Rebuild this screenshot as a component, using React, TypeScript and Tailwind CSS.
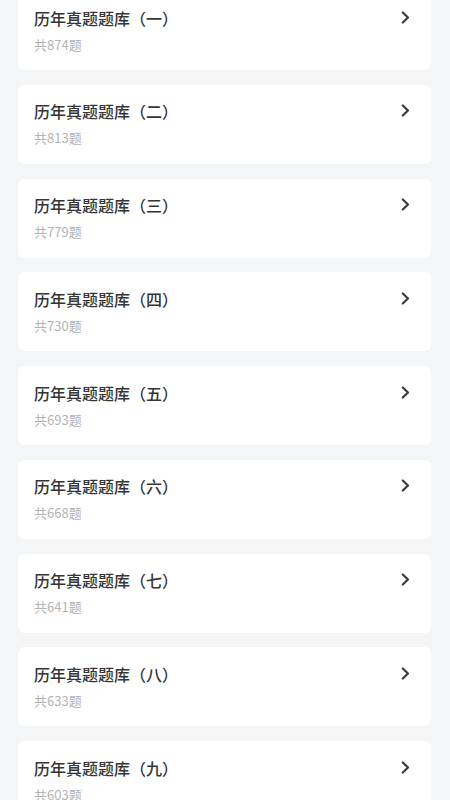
const banks = [
  { name: "历年真题题库（一）", count: 874 },
  { name: "历年真题题库（二）", count: 813 },
  { name: "历年真题题库（三）", count: 779 },
  { name: "历年真题题库（四）", count: 730 },
  { name: "历年真题题库（五）", count: 693 },
  { name: "历年真题题库（六）", count: 668 },
  { name: "历年真题题库（七）", count: 641 },
  { name: "历年真题题库（八）", count: 633 },
  { name: "历年真题题库（九）", count: 603 },
];

function Chevron() {
  return (
    <svg width="9" height="13" viewBox="0 0 9 13" fill="none" className="shrink-0">
      <path d="M1.8 1.5 L7 6.5 L1.8 11.5" stroke="#3a3a3a" strokeWidth="2.2" strokeLinecap="round" strokeLinejoin="round" />
    </svg>
  );
}

export default function App() {
  return (
    <div
      className="min-h-[800px] w-full overflow-hidden bg-[#f4f5f7]"
      style={{ fontFamily: '"Noto Sans CJK SC", "Noto Sans", sans-serif' }}
    >
      <div className="-mt-[9px] flex flex-col gap-[14.75px] pl-[18px] pr-[19px]">
        {banks.map((b) => (
          <div
            key={b.name}
            className="flex h-[79px] items-center justify-between rounded-[6px] bg-white pl-4 pr-[21px]"
          >
            <div className="flex flex-col">
              <div className="text-[16px] font-medium leading-[20px] text-[#353535]">{b.name}</div>
              <div className="mt-[8px] text-[13px] leading-[18px] text-[#b3b3b3]">共{b.count}题</div>
            </div>
            <div className="-mt-[27px]">
              <Chevron />
            </div>
          </div>
        ))}
      </div>
    </div>
  );
}
